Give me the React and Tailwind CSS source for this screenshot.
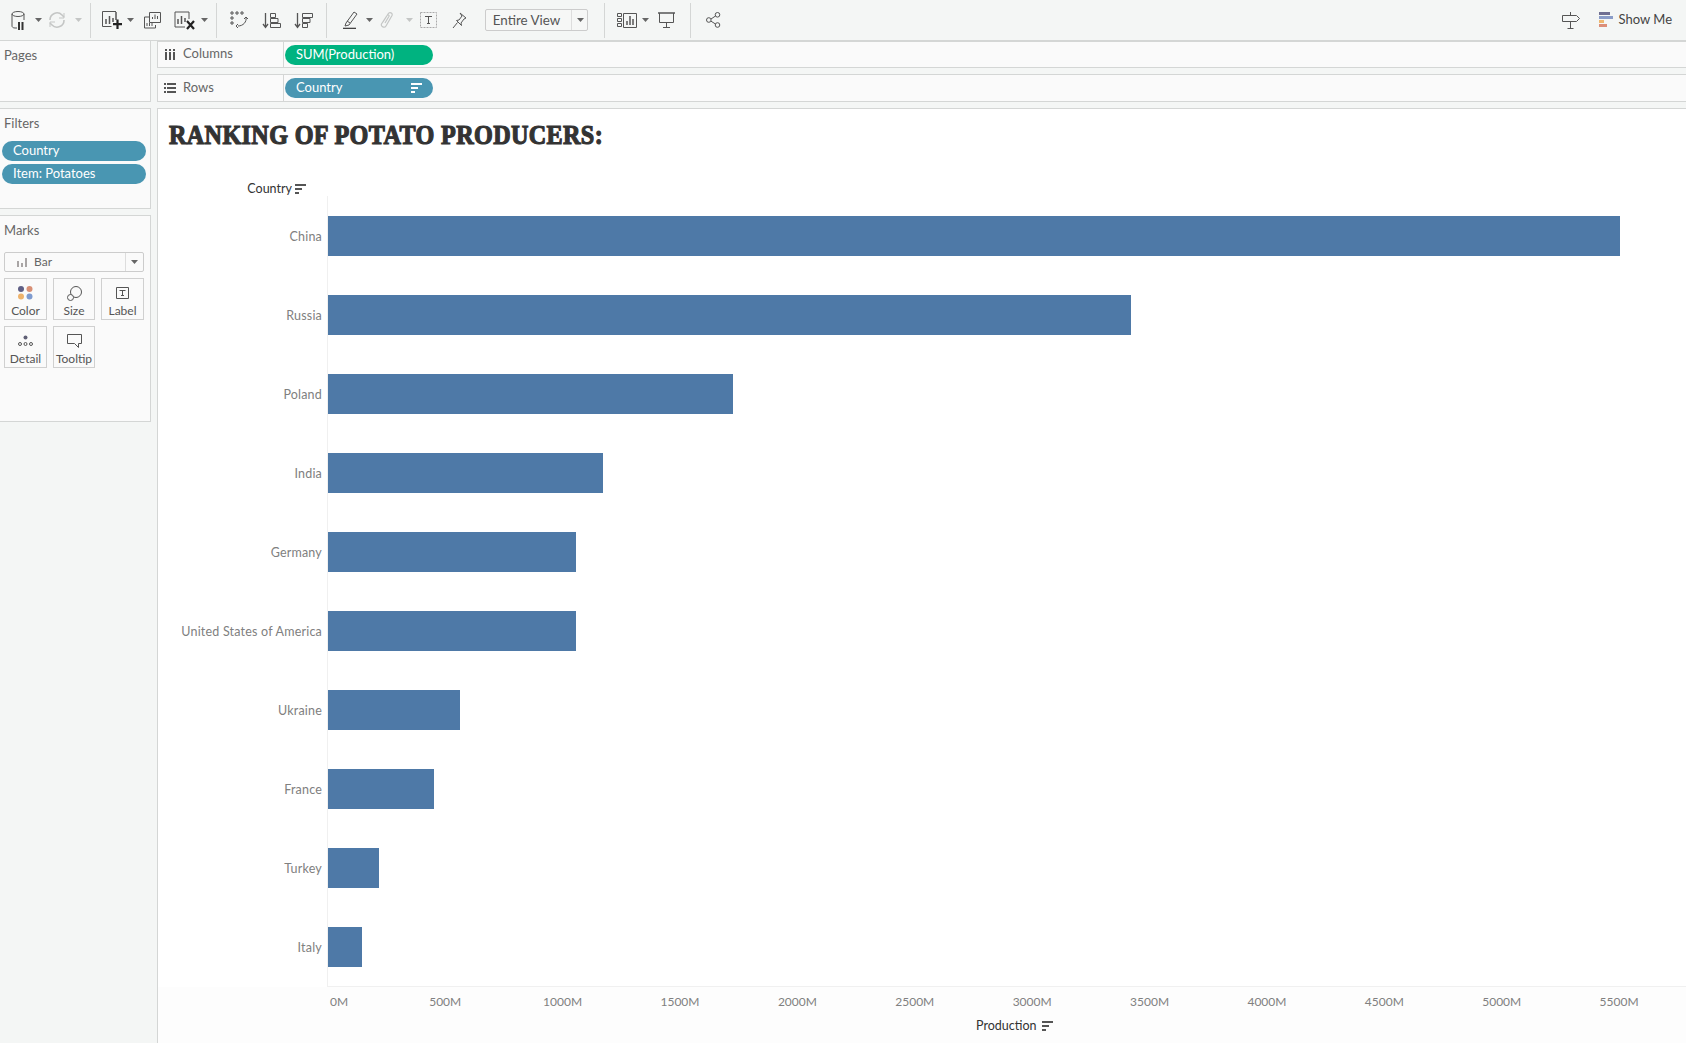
const rows = [
  { name: "China", value: 5500 },
  { name: "Russia", value: 3416 },
  { name: "Poland", value: 1720 },
  { name: "India", value: 1167 },
  { name: "Germany", value: 1052 },
  { name: "United States of America", value: 1050 },
  { name: "Ukraine", value: 558 },
  { name: "France", value: 449 },
  { name: "Turkey", value: 215 },
  { name: "Italy", value: 141 },
];

const ticks = ["500M", "1000M", "1500M", "2000M", "2500M", "3000M", "3500M", "4000M", "4500M", "5000M", "5500M"];
const PX_PER_M = 0.2348;

const Caret = ({ className = "", color = "#666" }) => (
  <svg width="7" height="4" viewBox="0 0 7 4" className={className}>
    <path d="M0 0h7L3.5 4z" fill={color} />
  </svg>
);

const Divider = ({ className = "" }) => <div className={`w-px h-[35px] bg-[#d4d6d5] ${className}`} />;

const SortLines = ({ color = "#555", className = "" }) => (
  <svg width="11" height="10" viewBox="0 0 11 10" className={className}>
    <path d="M0 0h11v2H0zM0 4h7v2H0zM0 8h4v2H0z" fill={color} />
  </svg>
);

const Ico = ({ w, h, className = "", children }) => (
  <svg width={w} height={h} viewBox={`0 0 ${w} ${h}`} fill="none" stroke="#555" strokeWidth="1" className={className}>
    {children}
  </svg>
);

const Toolbar = () => (
  <div className="h-[41px] flex items-center border-b border-[#d4d6d5] bg-[#f4f6f5] relative">
    <Ico w={14} h={19} className="ml-[11px]">
      <ellipse cx="7" cy="3" rx="6" ry="2.5" />
      <path d="M1 3v12c0 1 1 2 3 2h2M13 3v6" />
      <path d="M7 11h2v8H7zM10.500 11h2v8h-2z" fill="#333" stroke="none" />
    </Ico>
    <Caret className="ml-[10px]" />
    <Ico w={18} h={18} className="ml-[6px]">
      <path d="M2 9a7 7 0 0 1 12-5l2 2M16 9a7 7 0 0 1-12 5l-2-2" stroke="#c4c6c5" strokeWidth="1.6" />
      <path d="M16 2v5h-5M2 16v-5h5" stroke="#c4c6c5" />
    </Ico>
    <Caret className="ml-[9px]" color="#c4c6c5" />
    <Divider className="ml-[8px]" />
    <Ico w={20} h={18} className="ml-[11px]">
      <path d="M14 .5H.5v15h9" />
      <path d="M4 8v5M7.500 5v8M11 7v4M14 1v8" strokeWidth="1.5" />
      <path d="M15.500 8.500v9.500M11 13.200h9" stroke="#222" strokeWidth="2.2" />
    </Ico>
    <Caret className="ml-[5px]" />
    <Ico w={17} h={17} className="ml-[10px]">
      <path d="M5.500 .5h11v10h-11z" />
      <path d="M8.500 7V5M11 7V2.500M13.500 7V4" />
      <path d="M5 5H.5v11h11v-3" />
      <path d="M3 14v-3M5.500 14v-3M8 14v-3" />
    </Ico>
    <Ico w={21} h={19} className="ml-[13px]">
      <path d="M15 1H1v15h10M15 1v7" />
      <path d="M4 8v5M7.500 5v8M11 7v4" strokeWidth="1.5" />
      <path d="M13 10l7 8M20 10l-7 8" stroke="#222" strokeWidth="2.2" />
    </Ico>
    <Caret className="ml-[6px]" />
    <Divider className="ml-[8px]" />
    <Ico w={18} h={19} className="ml-[13px]">
      <path d="M1 1h2v2H1zM6 1h2v2H6zM11 1h2v2h-2zM1 6h2v2H1zM1 11h2v2H1z" />
      <path d="M16 6c1 5-3 9-8 9M8 13l-2 2 2 2M14 8l2-2 2 2" />
    </Ico>
    <Ico w={19} h={17} className="ml-[14px]">
      <path d="M3.500 1v14M1 12l2.500 3.500L6 12" strokeWidth="1.3" />
      <path d="M8.500 1.500h5v4h-5zM8.500 6.500h7.500v4H8.500zM8.500 11.500h10v4h-10z" />
    </Ico>
    <Ico w={19} h={17} className="ml-[13px]">
      <path d="M3.500 1v14M1 12l2.500 3.500L6 12" strokeWidth="1.3" />
      <path d="M8.500 1.500h10v4h-10zM8.500 6.500h7.500v4H8.500zM8.500 11.500h5v4h-5z" />
    </Ico>
    <Divider className="ml-[13px]" />
    <Ico w={16} h={18} className="ml-[16px]">
      <path d="M3 12l8-11 3 2-8 11-4 1z" />
      <path d="M4 10l3 2" />
      <path d="M0 17.500h13" stroke="#444" strokeWidth="1.600" />
    </Ico>
    <Caret className="ml-[7px]" />
    <Ico w={14} h={18} className="ml-[7px]">
      <path d="M3 11l5-8c1.500-2.500 5-1 4 1.500L6 15c-1.500 2.500-5.500.5-4.500-2L7 4.500c.7-1.200 2.500-.5 2 .8L5 12" stroke="#c4c6c5" strokeWidth="1.200" />
    </Ico>
    <Caret className="ml-[12px]" color="#c4c6c5" />
    <Ico w={17} h={16} className="ml-[7px]">
      <path d="M.5.500h16v15H.5z" strokeDasharray="2 1" stroke="#aaa" />
      <path d="M5 4.500h7M8.500 4.500v7M7 11.500h3" stroke="#555" />
    </Ico>
    <Ico w={15} h={17} className="ml-[15px]">
      <path d="M8 1l6 5-2 1-3 4 .5 2.500-5-5L7 8l3-4zM5.500 10.500L1 16" />
    </Ico>
    <div className="ml-[18px] w-[103px] h-[22px] flex items-center border border-[#ccc] rounded-[2px] bg-[#f6f7f6]">
      <span className="w-[81px] text-center text-[13.400px] text-[#555]">Entire View</span>
      <div className="ml-[4px] w-px h-full bg-[#ddd]" />
      <Caret className="ml-[5px]" />
    </div>
    <Divider className="ml-[16px]" />
    <Ico w={20} h={15} className="ml-[12px]">
      <path d="M.5.500h4v3h-4zM.5 5.500h4v3h-4zM.5 10.500h4v3h-4zM6.500.500h13v14h-13z" />
      <path d="M10 12V8M13 12V3M16 12V6" strokeWidth="1.500" />
    </Ico>
    <Caret className="ml-[5px]" />
    <Ico w={17} h={16} className="ml-[9px]">
      <path d="M0 1h17" strokeWidth="1.500" />
      <path d="M1.500 1v9.500h14V1M8.500 10.500V15M5 15.500h7" />
    </Ico>
    <Divider className="ml-[15px]" />
    <Ico w={15} h={16} className="ml-[15px]">
      <circle cx="2.800" cy="8" r="2.300" />
      <circle cx="11.500" cy="2.800" r="2.300" />
      <circle cx="11.500" cy="13" r="2.300" />
      <path d="M5 7l4.500-3M5 9.200l4.500 2.800" />
    </Ico>
    <div className="ml-auto flex items-center pr-[14px]">
      <Ico w={18} h={18}>
        <path d="M.5 4.500h14l3 3-3 3H.5zM8.500 1v3.500M8.500 10.500V17.500M5.500 17.500h6" />
      </Ico>
      <svg width="14" height="16" viewBox="0 0 14 16" className="ml-[19px]">
        <path d="M0 0h11v3H0z" fill="#6f6f92" />
        <path d="M0 4h14v3H0z" fill="#8a9cc8" />
        <path d="M0 8h5v3H0z" fill="#eeb76f" />
        <path d="M0 12h8v3H0z" fill="#dc8e78" />
      </svg>
      <span className="ml-[6px] text-[13px] text-[#444]">Show Me</span>
    </div>
  </div>
);

const Shelf = ({ icon, label, height, children }) => (
  <div className={`${height} flex border-y border-l border-[#d4d6d5] bg-[#fafafa]`}>
    <div className="w-[126px] flex items-center pb-[1px] border-r border-[#d4d6d5] text-[13px] text-[#666]">
      <div className="w-[23px] flex justify-center">{icon}</div>
      <span className="ml-[2px]">{label}</span>
    </div>
    <div className="flex items-center pl-[1px]">{children}</div>
  </div>
);

const Pill = ({ className = "", children }) => (
  <div className={`h-[20px] flex items-center rounded-full text-white text-[13px] pl-[11px] ${className}`}>{children}</div>
);

const Tile = ({ label, icon, width = "w-[43px]" }) => (
  <div className={`${width} h-[42px] border border-[#d0d0d0] flex flex-col items-center bg-[#fafafa]`}>
    <div className="h-[25px] flex items-center justify-center pt-[3px]">{icon}</div>
    <span className="text-[12px] leading-[14px] text-[#555]">{label}</span>
  </div>
);

const SidePanel = () => (
  <div className="w-[151px] flex flex-col shrink-0">
    <div className="h-[61px] border-r border-b border-[#d4d6d5] bg-[#fafafa] px-[4px] pt-[5px] text-[13px] text-[#666]">Pages</div>
    <div className="h-[101px] mt-[6px] border-r border-y border-[#d4d6d5] bg-[#fafafa] text-[13px] text-[#666]">
      <div className="px-[4px] pt-[5px] h-[32px]">Filters</div>
      <div className="flex flex-col gap-[3px] pl-[2px] pr-[4px]">
        <Pill className="bg-[#4996b2]">Country</Pill>
        <Pill className="bg-[#4996b2]">Item: Potatoes</Pill>
      </div>
    </div>
    <div className="h-[207px] mt-[6px] border-r border-y border-[#d4d6d5] bg-[#fafafa]">
      <div className="px-[4px] pt-[5px] h-[36px] text-[13px] text-[#666]">Marks</div>
      <div className="ml-[4px] w-[140px] h-[20px] flex items-center border border-[#ccc] rounded-[2px]">
        <svg width="10" height="9" viewBox="0 0 10 9" className="ml-[12px]">
          <path d="M0 3h2v6H0zM4 5h2v4H4zM8 0h2v9H8z" fill="#a9a5a5" />
        </svg>
        <span className="ml-[7px] text-[12px] text-[#666]">Bar</span>
        <div className="ml-auto w-px h-full bg-[#ddd]" />
        <Caret className="mx-[5px]" />
      </div>
      <div className="ml-[4px] mt-[6px] flex gap-[6px]">
        <Tile
          label="Color"
          icon={
            <svg width="15" height="14" viewBox="0 0 15 14">
              <circle cx="3" cy="3" r="3" fill="#5f5f85" />
              <circle cx="11.500" cy="3" r="3" fill="#d88f75" />
              <circle cx="3" cy="10.500" r="3" fill="#eeb36d" />
              <circle cx="11.500" cy="10.500" r="3" fill="#7f9bcf" />
            </svg>
          }
        />
        <Tile
          label="Size"
          width="w-[42px]"
          icon={
            <Ico w={15} h={15}>
              <circle cx="9" cy="6" r="5.500" />
              <circle cx="3.500" cy="11.500" r="3" fill="#fafafa" />
            </Ico>
          }
        />
        <Tile
          label="Label"
          icon={
            <Ico w={13} h={12}>
              <path d="M.5.500h12v11H.5z" />
              <path d="M3.500 3.500h6M6.500 3.500v5M5 8.500h3" />
            </Ico>
          }
        />
      </div>
      <div className="ml-[4px] mt-[6px] flex gap-[6px]">
        <Tile
          label="Detail"
          icon={
            <svg width="15" height="12" viewBox="0 0 15 12" fill="none" stroke="#555">
              <circle cx="7.500" cy="2.500" r="2" fill="#5f5f75" stroke="none" />
              <circle cx="2" cy="9" r="1.500" />
              <circle cx="7.500" cy="9" r="1.500" />
              <circle cx="13" cy="9" r="1.500" />
            </svg>
          }
        />
        <Tile
          label="Tooltip"
          width="w-[42px]"
          icon={
            <Ico w={15} h={14}>
              <path d="M.5.500h14v9h-3v4l-4-4h-7z" />
            </Ico>
          }
        />
      </div>
    </div>
  </div>
);

const Chart = () => (
  <div className="flex-1 min-h-0 border-l border-t border-[#d4d6d5] bg-white overflow-hidden">
    <h1 className="h-[47px] pl-[11px] pt-[6px] whitespace-nowrap">
      <span className="inline-block origin-left scale-x-[0.895] font-['Liberation_Serif',serif] font-bold text-[27px] leading-[40px] tracking-[0.4px] text-[#333] [-webkit-text-stroke:1.2px_#333]">
        RANKING OF POTATO PRODUCERS:
      </span>
    </h1>
    <div className="h-[40px] w-[169px] relative text-[12.500px] text-[#333]">
      <div className="flex items-center gap-[3px] absolute right-[21px] top-[24px]">
        <span>Country</span>
        <SortLines />
      </div>
    </div>
    <div className="flex">
      <div className="w-[169px] shrink-0">
        {rows.map((r) => (
          <div key={r.name} className="h-[79px] flex items-center justify-end pt-[3px] pr-[5px] text-[12.500px] tracking-[0.2px] text-[#808080]">
            {r.name}
          </div>
        ))}
      </div>
      <div className="flex-1 border-l border-b border-[#f0f0f0]">
        {rows.map((r) => (
          <div key={r.name} className="h-[79px] flex items-center">
            <div className="h-[40px] bg-[#4e79a7]" style={{ width: r.value * PX_PER_M + 1 }} />
          </div>
        ))}
      </div>
    </div>
    <div className="flex pl-[172px] pt-[6px] text-[12px] leading-[18px] text-[#808080] bg-[#fdfdfd] h-[56px] flex-wrap content-start">
      <span className="w-[56.500px]">0M</span>
      {ticks.map((t) => (
        <span key={t} className="w-[117.400px] text-center">
          {t}
        </span>
      ))}
      <div className="w-full flex items-center gap-[6px] pl-[646px] mt-[6px] text-[12.500px] text-[#333]">
        <span>Production</span>
        <SortLines />
      </div>
    </div>
  </div>
);

export default function App() {
  return (
    <div className="w-[1686px] h-[1043px] flex flex-col overflow-hidden bg-[#f4f6f5] font-['Lato',sans-serif]">
      <Toolbar />
      <div className="flex flex-1 min-h-0">
        <SidePanel />
        <div className="flex-1 min-w-0 flex flex-col ml-[6px]">
          <Shelf
            label="Columns"
            height="h-[27px]"
            icon={
              <svg width="10" height="11" viewBox="0 0 10 11" fill="#555">
                <path d="M0 0h2v2H0zM4 0h2v2H4zM8 0h2v2H8zM0 3h2v8H0zM4 3h2v8H4zM8 3h2v8H8z" />
              </svg>
            }
          >
            <Pill className="w-[148px] bg-[#00b380]">SUM(Production)</Pill>
          </Shelf>
          <div className="mt-[6px]">
            <Shelf
              label="Rows"
              height="h-[28px]"
              icon={
                <svg width="12" height="10" viewBox="0 0 12 10" fill="#555">
                  <path d="M0 0h2v2H0zM3 0h9v2H3zM0 4h2v2H0zM3 4h9v2H3zM0 8h2v2H0zM3 8h9v2H3z" />
                </svg>
              }
            >
              <Pill className="w-[148px] bg-[#4996b2] justify-between pr-[11px]">
                Country
                <SortLines color="#fff" />
              </Pill>
            </Shelf>
          </div>
          <div className="h-[6px]" />
          <Chart />
        </div>
      </div>
    </div>
  );
}
